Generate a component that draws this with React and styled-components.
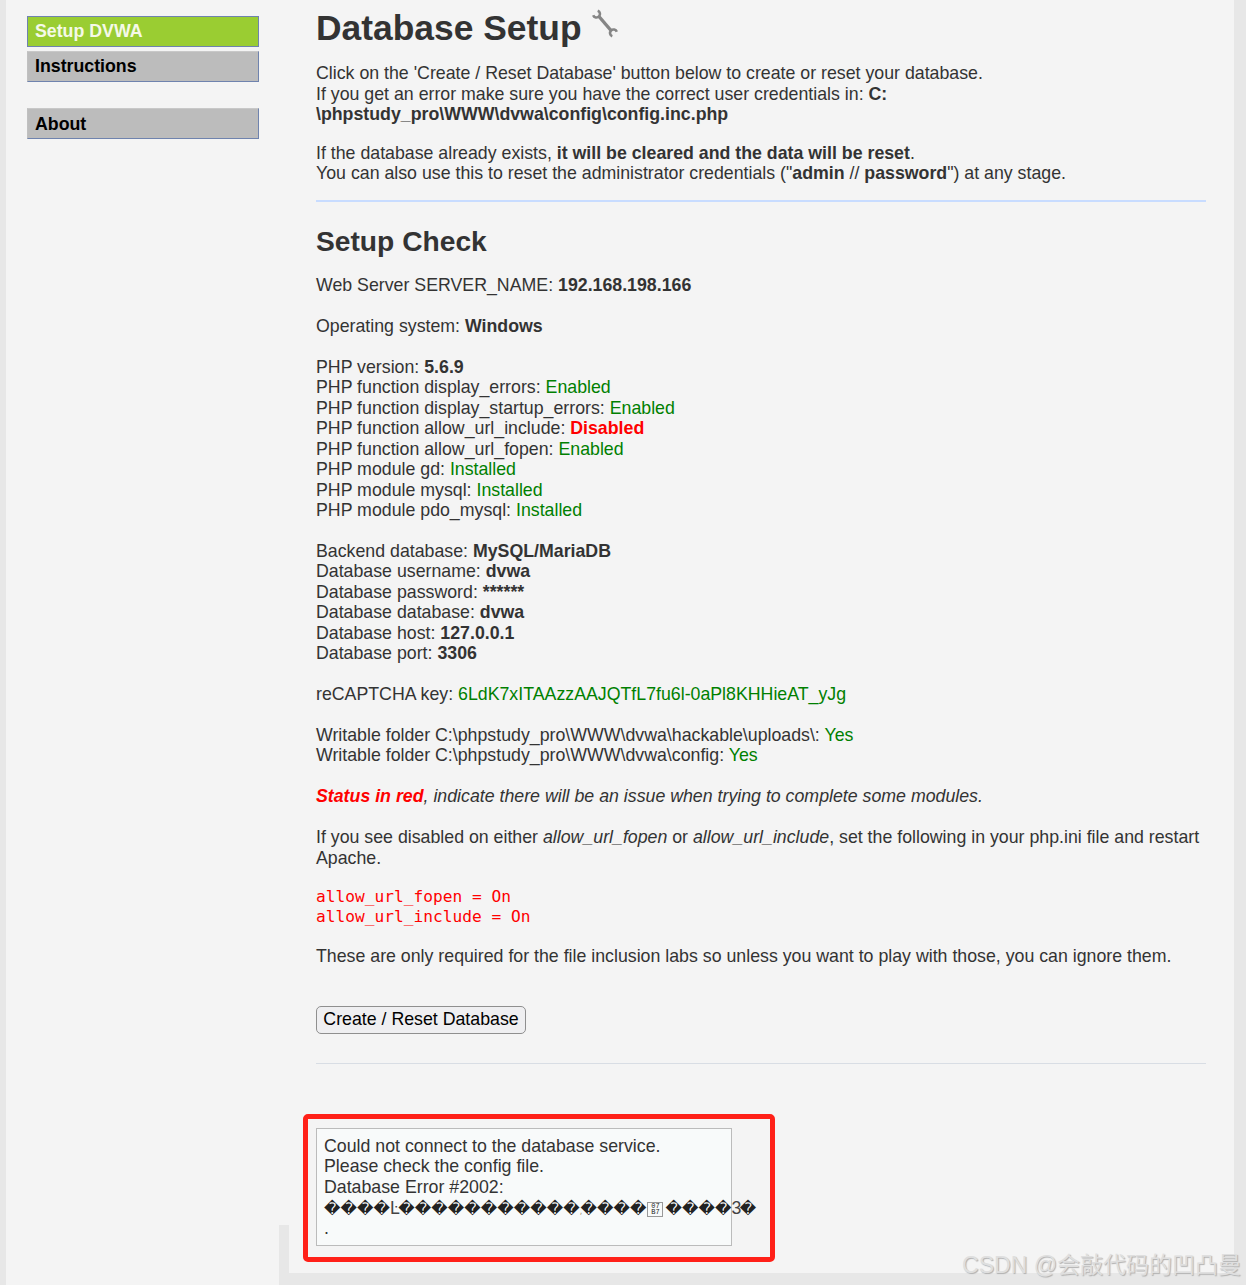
import styled, { createGlobalStyle } from "styled-components";

const GlobalStyle = createGlobalStyle`
  html, body {
    margin: 0;
    padding: 0;
    background: #e7e7e7;
  }
  body {
    font-family: "Liberation Sans", Arial, sans-serif;
    font-size: 17.75px;
    line-height: 20.5px;
    color: #333;
  }
`;

const checks = [
  ["PHP function display_errors", "Enabled"],
  ["PHP function display_startup_errors", "Enabled"],
  ["PHP function allow_url_include", "Disabled", true],
  ["PHP function allow_url_fopen", "Enabled"],
  ["PHP module gd", "Installed"],
  ["PHP module mysql", "Installed"],
  ["PHP module pdo_mysql", "Installed"],
];

const dbInfo = [
  ["Backend database", "MySQL/MariaDB"],
  ["Database username", "dvwa"],
  ["Database password", "******"],
  ["Database database", "dvwa"],
  ["Database host", "127.0.0.1"],
  ["Database port", "3306"],
];

function Spanner() {
  return (
    <SpannerIcon viewBox="0 0 30 30" width="30" height="30" fill="none" stroke="#858585">
      <path d="M2.2 6.2 A3.5 3.5 0 1 0 6.7 1.7" strokeWidth="2.6" />
      <path d="M25.8 22.8 A3.5 3.5 0 1 0 21.3 27.3" strokeWidth="2.6" />
      <path d="M8 7.5 L20 21.5" strokeWidth="3.4" />
    </SpannerIcon>
  );
}

export default function App() {
  return (
    <>
      <GlobalStyle />
      <Page>
        <Sidebar>
          <MenuItem $active>Setup DVWA</MenuItem>
          <MenuItem>Instructions</MenuItem>
          <MenuItem $spaced>About</MenuItem>
        </Sidebar>
        <Main>
          <Title>
            Database Setup <Spanner />
          </Title>
          <Block $top={19}>
            Click on the 'Create / Reset Database' button below to create or reset your database.
            <br />
            If you get an error make sure you have the correct user credentials in: <b>C:</b>
            <br />
            <b>\phpstudy_pro\WWW\dvwa\config\config.inc.php</b>
          </Block>
          <Block $top={18}>
            If the database already exists, <b>it will be cleared and the data will be reset</b>.
            <br />
            You can also use this to reset the administrator credentials ("<b>admin</b> // <b>password</b>") at any stage.
          </Block>
          <Rule $blue />
          <SubTitle>Setup Check</SubTitle>
          <Block $top={16}>
            Web Server SERVER_NAME: <b>192.168.198.166</b>
          </Block>
          <Block>
            Operating system: <b>Windows</b>
          </Block>
          <Block>
            PHP version: <b>5.6.9</b>
            {checks.map(([label, value, bad]) => (
              <div key={label}>
                {label}: <Status $bad={bad}>{value}</Status>
              </div>
            ))}
          </Block>
          <Block>
            {dbInfo.map(([label, value]) => (
              <div key={label}>
                {label}: <b>{value}</b>
              </div>
            ))}
          </Block>
          <Block>
            reCAPTCHA key: <Status>6LdK7xITAAzzAAJQTfL7fu6l-0aPl8KHHieAT_yJg</Status>
          </Block>
          <Block>
            Writable folder C:\phpstudy_pro\WWW\dvwa\hackable\uploads\: <Status>Yes</Status>
            <br />
            Writable folder C:\phpstudy_pro\WWW\dvwa\config: <Status>Yes</Status>
          </Block>
          <Block>
            <i>
              <Status $bad>Status in red</Status>, indicate there will be an issue when trying to complete some modules.
            </i>
          </Block>
          <Block>
            If you see disabled on either <i>allow_url_fopen</i> or <i>allow_url_include</i>, set the following in your php.ini file and restart Apache.
          </Block>
          <Code>
            allow_url_fopen = On
            <br />
            allow_url_include = On
          </Code>
          <Block $top={18.5}>
            These are only required for the file inclusion labs so unless you want to play with those, you can ignore them.
          </Block>
          <ResetButton>Create / Reset Database</ResetButton>
          <Rule />
          <ErrorBox>
            Could not connect to the database service.
            <br />
            Please check the config file.
            <br />
            Database Error #2002:
            <Garbled>
              {"\uFFFD\uFFFD\uFFFD\uFFFD"}
              <Thin>Ŀ</Thin>
              {"\uFFFD\uFFFD\uFFFD\uFFFD\uFFFD\uFFFD\uFFFD\uFFFD\uFFFD\uFFFD\uFFFD"}
              <TinyComma>,</TinyComma>
              {"\uFFFD\uFFFD\uFFFD\uFFFD"}
              <HexBox>
                07
                <br />
                B7
              </HexBox>
              {"\uFFFD\uFFFD\uFFFD\uFFFD"}
              <Thin>3</Thin>
              {"\uFFFD"}
            </Garbled>
            .
          </ErrorBox>
          <Highlight />
        </Main>
        <Watermark>CSDN @会敲代码的凹凸曼</Watermark>
      </Page>
    </>
  );
}

const Page = styled.div`
  position: relative;
  display: flex;
  width: 1228px;
  height: 1285px;
  margin-left: 6px;
  background: #f4f4f4;
`;

const Sidebar = styled.nav`
  width: 232px;
  flex: none;
  padding: 16px 20px 0 21px;
  display: flex;
  flex-direction: column;
`;

const MenuItem = styled.div`
  height: 31px;
  margin-top: ${(p) => (p.$spaced ? "26px" : p.$active ? "0" : "4px")};
  padding-left: 7px;
  padding-top: ${(p) => (p.$spaced ? "1px" : "0")};
  box-sizing: border-box;
  display: flex;
  align-items: center;
  font-size: 17.75px;
  font-weight: bold;
  color: ${(p) => (p.$active ? "#f5f9e8" : "#000")};
  background: ${(p) => (p.$active ? "#9acd32" : "#bcbcbc")};
  border: 1px solid #6f83ae;
  border-top-color: ${(p) => (p.$active ? "#6f83ae" : "#c8c8c8")};
  border-left-color: ${(p) => (p.$active ? "#6f83ae" : "#c0c0c0")};
`;

const Main = styled.main`
  position: relative;
  flex: 1;
  padding: 0 28px 0 37px;

  &::before {
    content: "";
    position: absolute;
    left: 0;
    right: 0;
    top: 1225px;
    bottom: 0;
    z-index: 0;
    background: linear-gradient(#f4f4f4, #f4f4f4) 10px 0 / 100% 48px no-repeat, #e7e7e7;
  }
  > * {
    position: relative;
    z-index: 1;
  }
`;

const Title = styled.h1`
  margin: 0;
  padding-top: 8px;
  height: 36px;
  font-size: 35.4px;
  line-height: 40px;
  font-weight: bold;
  color: #333;
`;

const SpannerIcon = styled.svg`
  vertical-align: 1px;
  margin-left: 0;
  filter: blur(0.5px);
`;

const SubTitle = styled.h2`
  margin: 21px 0 0;
  font-size: 28.2px;
  line-height: 36px;
  font-weight: bold;
  color: #333;
`;

const Block = styled.div`
  margin-top: ${(p) => (p.$top !== undefined ? p.$top : 20.3)}px;
`;

const Status = styled.span`
  color: ${(p) => (p.$bad ? "#f00" : "#008000")};
  font-weight: ${(p) => (p.$bad ? "bold" : "normal")};
`;

const Rule = styled.div`
  margin-top: ${(p) => (p.$blue ? "16.5px" : "29px")};
  height: ${(p) => (p.$blue ? "2px" : "1px")};
  background: ${(p) => (p.$blue ? "#c8dcff" : "#d8dde4")};
`;

const Code = styled.pre`
  margin: 18.5px 0 0;
  font-family: "DejaVu Sans Mono", monospace;
  font-size: 16.2px;
  line-height: 20.4px;
  color: #f00;
`;

const ResetButton = styled.button`
  display: block;
  margin-top: 39.5px;
  width: 210px;
  height: 28px;
  padding: 0;
  font-family: "Liberation Sans", Arial, sans-serif;
  font-size: 17.75px;
  color: #000;
  background: #efeff1;
  border: 1px solid #8f8f8f;
  border-radius: 5px;
`;

const ErrorBox = styled.div`
  margin-top: 64px;
  width: 416px;
  height: 118px;
  box-sizing: border-box;
  padding: 7px;
  white-space: nowrap;
  background: #f8fafa;
  border: 1px solid #bbb;
`;

const Garbled = styled.div`
  height: 20.5px;
  padding-top: 1px;
  margin-bottom: -1px;
  font-family: "DejaVu Sans", "Liberation Sans", sans-serif;
  font-size: 16px;
  line-height: 20.5px;
  letter-spacing: 0.1px;
  color: #222;
`;

const Thin = styled.span`
  font-family: "Liberation Sans", sans-serif;
  font-size: 17.75px;
  letter-spacing: -1.7px;
  color: #444;
`;

const TinyComma = styled.span`
  font-size: 8px;
  color: #a08a70;
  margin-right: -2px;
`;

const HexBox = styled.span`
  display: inline-block;
  width: 16px;
  height: 15px;
  box-sizing: border-box;
  border: 1px solid #999;
  font-family: "Liberation Mono", monospace;
  font-size: 7px;
  line-height: 6.5px;
  letter-spacing: 0;
  text-align: center;
  vertical-align: 0;
  margin: 0 2px 0 1px;
  color: #222;
`;

const Highlight = styled.div`
  position: absolute !important;
  z-index: 2;
  left: 24px;
  top: 1114px;
  width: 472px;
  height: 148px;
  box-sizing: border-box;
  border: 5px solid #ff2018;
  border-radius: 5px;
`;

const Watermark = styled.div`
  position: absolute;
  right: -7px;
  bottom: 6px;
  z-index: 3;
  font-family: "Liberation Sans", "Noto Sans CJK SC", sans-serif;
  font-size: 23px;
  line-height: 28px;
  white-space: nowrap;
  color: #dfdfdf;
  text-shadow: 1px 1px 1px #b0b0b0;
`;
